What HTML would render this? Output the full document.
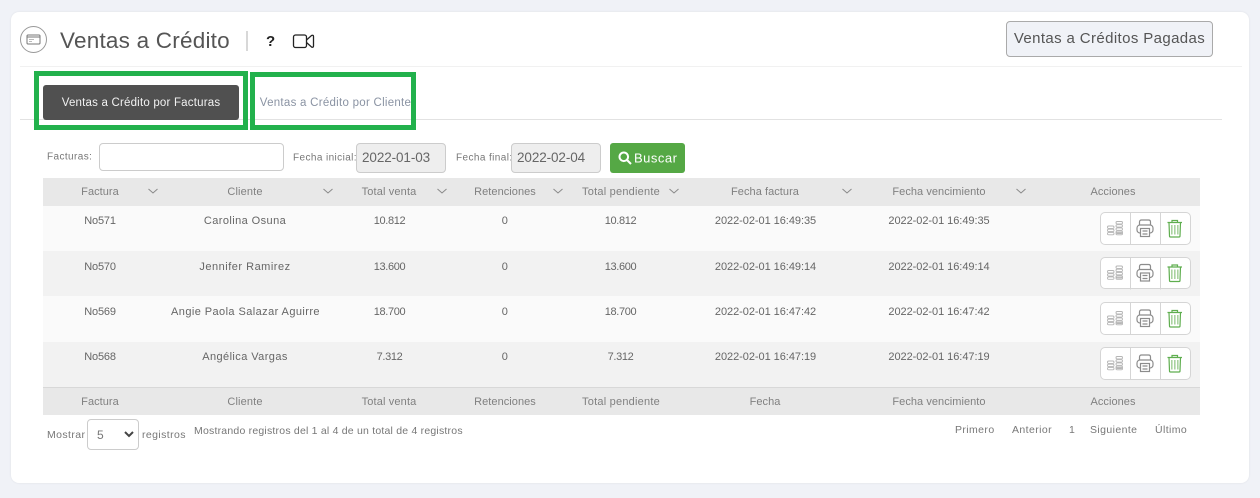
<!DOCTYPE html>
<html lang="es"><head><meta charset="utf-8"><title>Ventas a Crédito</title>
<style>
html,body{margin:0;padding:0;width:1260px;height:498px;overflow:hidden;background:#f0f2f7;font-family:"Liberation Sans",sans-serif;}
.a{position:absolute;}
.t{position:absolute;white-space:nowrap;transform:translate(-50%,-50%);font-size:11px;color:#777;letter-spacing:.42px;}
.l{position:absolute;white-space:nowrap;transform:translateY(-50%);font-size:10.5px;color:#777;letter-spacing:.4px;}
.d{font-size:11px;color:#666;}
.h{color:#808080;letter-spacing:.05px;}
.c{letter-spacing:.14px;}
.v{letter-spacing:.15px;}
.p{letter-spacing:.22px;}
.no{letter-spacing:-.18px;}
.n{letter-spacing:-.35px;}
.f{letter-spacing:-.05px;}
.bg{border:5px solid #22b14c;box-sizing:border-box;}
.date{position:absolute;box-sizing:border-box;top:143px;height:30px;background:#eee;border:1px solid #ccc;border-radius:4px;font-size:13.5px;letter-spacing:-.1px;color:#666;line-height:28px;padding-left:5px;}
.acts{position:absolute;left:1100px;width:91px;box-sizing:border-box;background:#fff;border:1px solid #d5d5d5;border-radius:5px;}
.acts svg{position:absolute;left:0;top:0;}
</style></head><body>
<div class="a" style="left:11px;top:12px;width:1238px;height:471px;background:#fff;border-radius:8px;box-shadow:0 0 2px rgba(0,0,0,.08)"></div>

<svg class="a" style="left:20px;top:26px" width="28" height="28" viewBox="0 0 28 28" fill="none"><circle cx="13.5" cy="13.5" r="13" stroke="#999"/><rect x="7" y="9" width="13" height="9" rx="1" stroke="#777"/><path d="M7 11h13" stroke="#777"/><path d="M9 13.5h5M9 15.5h3" stroke="#bbb"/></svg>
<div class="a" style="left:60px;top:27px;font-size:22.5px;line-height:28px;color:#555;letter-spacing:.22px;white-space:nowrap">Ventas a Crédito</div>
<div class="a" style="left:246px;top:31px;width:2px;height:20px;background:#d8d8d8"></div>
<div class="a" style="left:266px;top:32px;font-size:15px;line-height:20px;font-weight:bold;color:#222">?</div>
<svg class="a" style="left:292px;top:34px" width="24" height="16" viewBox="0 0 24 16" fill="none" stroke="#222" stroke-width="1.3"><rect x="1.500" y="1" width="13" height="12.500" rx="2"/><path d="M14.500 6l5-4.500q2-.8 2 1v9.500q0 1.800-2 1l-5-4.500"/></svg>

<div class="a" style="left:1006px;top:21px;width:207px;height:36px;box-sizing:border-box;background:#f0f2f7;border:1px solid #aaa;border-radius:4px;font-size:15px;line-height:33px;text-align:center;color:#555;letter-spacing:.38px;white-space:nowrap">Ventas a Créditos Pagadas</div>
<div class="a" style="left:20px;top:66px;width:1222px;height:1px;background:#f1f1f1"></div>
<div class="a" style="left:20px;top:119px;width:1202px;height:1px;background:#e2e2e2"></div>

<div class="a" style="left:43px;top:85px;width:196px;height:35px;background:#505050;border-radius:3px;color:#f2f2f2;font-size:11.500px;line-height:36px;text-align:center;letter-spacing:.2px;white-space:nowrap">Ventas a Crédito por Facturas</div>
<div class="t" style="left:335.500px;top:103px;color:#8a93a3;font-size:11.500px;letter-spacing:.27px">Ventas a Crédito por Cliente</div>
<div class="a bg" style="left:34px;top:71px;width:214px;height:59px"></div>
<div class="a bg" style="left:250px;top:72px;width:166px;height:58px"></div>

<div class="l" style="left:47px;top:157px;font-size:10px">Facturas:</div>
<div class="a" style="left:99px;top:143px;width:185px;height:28px;box-sizing:border-box;border:1px solid #ccc;border-radius:4px;background:#fff"></div>
<div class="l" style="left:293px;top:158px;font-size:10px">Fecha inicial:</div>
<div class="date" style="left:356px;width:90px">2022-01-03</div>
<div class="l" style="left:456px;top:158px;font-size:10px">Fecha final:</div>
<div class="date" style="left:511px;width:90px">2022-02-04</div>
<div class="a" style="left:610px;top:143px;width:75px;height:30px;background:#55a845;border-radius:3px"></div>
<svg class="a" style="left:618px;top:151px" width="14" height="14" viewBox="0 0 14 14" fill="none" stroke="#fff" stroke-width="2"><circle cx="5.800" cy="5.800" r="4.300"/><path d="M9 9l4 4"/></svg>
<div class="l" style="left:634px;top:158px;font-size:13px;color:#fff;letter-spacing:.5px">Buscar</div>

<!-- table backgrounds -->
<div class="a" style="left:43px;top:178px;width:1157px;height:28px;background:#e8e8e8"></div>
<div class="a" style="left:43px;top:206px;width:1157px;height:45px;background:#fafafa"></div>
<div class="a" style="left:43px;top:251px;width:1157px;height:45px;background:#f2f2f2"></div>
<div class="a" style="left:43px;top:296px;width:1157px;height:46px;background:#fafafa"></div>
<div class="a" style="left:43px;top:342px;width:1157px;height:45px;background:#f2f2f2"></div>
<div class="a" style="left:43px;top:387px;width:1157px;height:1px;background:#d8d8d8"></div>
<div class="a" style="left:43px;top:388px;width:1157px;height:27px;background:#e8e8e8"></div>

<!-- header -->
<div class="t h" style="left:100px;top:192px">Factura</div>
<div class="t h c" style="left:245px;top:192px">Cliente</div>
<div class="t h v" style="left:389px;top:192px">Total venta</div>
<div class="t h" style="left:505px;top:192px">Retenciones</div>
<div class="t h p" style="left:621px;top:192px">Total pendiente</div>
<div class="t h" style="left:765px;top:192px">Fecha factura</div>
<div class="t h" style="left:939px;top:192px">Fecha vencimiento</div>
<div class="t h" style="left:1113px;top:192px">Acciones</div>
<svg class="a" style="left:0;top:185px" width="1260" height="12" fill="none" stroke="#8a8a8a" stroke-width="1">
<path d="M148.500 4l4.500 4 4.500-4M323.500 4l4.500 4 4.500-4M437.500 4l4.500 4 4.500-4M553.500 4l4.500 4 4.500-4M669.500 4l4.500 4 4.500-4M842.500 4l4.500 4 4.500-4M1016.500 4l4.500 4 4.500-4"/></svg>

<!-- row 1 -->
<div class="t d no" style="left:100px;top:221px">No571</div>
<div class="t d" style="left:245px;top:221px">Carolina Osuna</div>
<div class="t d n" style="left:389.500px;top:221px">10.812</div>
<div class="t d" style="left:505px;top:221px">0</div>
<div class="t d n" style="left:620.500px;top:221px">10.812</div>
<div class="t d f" style="left:765.500px;top:221px">2022-02-01 16:49:35</div>
<div class="t d f" style="left:939px;top:221px">2022-02-01 16:49:35</div>
<!-- row 2 -->
<div class="t d no" style="left:100px;top:267px">No570</div>
<div class="t d" style="left:245px;top:267px;letter-spacing:.5px">Jennifer Ramirez</div>
<div class="t d n" style="left:389.500px;top:267px">13.600</div>
<div class="t d" style="left:505px;top:267px">0</div>
<div class="t d n" style="left:620.500px;top:267px">13.600</div>
<div class="t d f" style="left:765.500px;top:267px">2022-02-01 16:49:14</div>
<div class="t d f" style="left:939px;top:267px">2022-02-01 16:49:14</div>
<!-- row 3 -->
<div class="t d no" style="left:100px;top:312px">No569</div>
<div class="t d" style="left:245.500px;top:312px">Angie Paola Salazar Aguirre</div>
<div class="t d n" style="left:389.500px;top:312px">18.700</div>
<div class="t d" style="left:505px;top:312px">0</div>
<div class="t d n" style="left:620.500px;top:312px">18.700</div>
<div class="t d f" style="left:765.500px;top:312px">2022-02-01 16:47:42</div>
<div class="t d f" style="left:939px;top:312px">2022-02-01 16:47:42</div>
<!-- row 4 -->
<div class="t d no" style="left:100px;top:357px">No568</div>
<div class="t d" style="left:245px;top:357px">Angélica Vargas</div>
<div class="t d n" style="left:389.500px;top:357px">7.312</div>
<div class="t d" style="left:505px;top:357px">0</div>
<div class="t d n" style="left:620.500px;top:357px">7.312</div>
<div class="t d f" style="left:765.500px;top:357px">2022-02-01 16:47:19</div>
<div class="t d f" style="left:939px;top:357px">2022-02-01 16:47:19</div>

<!-- actions -->
<svg width="0" height="0" style="position:absolute"><defs>
<g id="icons" fill="none">
<path d="M29.500 0v32M59.500 0v32" stroke="#d5d5d5"/>
<g stroke="#b5b5b5" stroke-width=".9"><rect x="6.500" y="13" width="6.500" height="2.400" rx="1.200"/><rect x="6.500" y="16.200" width="6.500" height="2.400" rx="1.200"/><rect x="6.500" y="19.400" width="6.500" height="2.400" rx="1.200"/><rect x="15" y="8.500" width="6.500" height="2.400" rx="1.200"/><rect x="15" y="11.700" width="6.500" height="2.400" rx="1.200"/><rect x="15" y="14.900" width="6.500" height="2.400" rx="1.200"/><rect x="15" y="18.100" width="6.500" height="2.400" rx="1.200"/><rect x="15" y="19.400" width="6.500" height="2.400" rx="1.200"/></g>
<g stroke="#8c8c8c" stroke-width="1.200"><path d="M38.500 12V9q0-2 2-2h7q2 0 2 2v3"/><rect x="36" y="12" width="16" height="8" rx="3"/><rect x="39.500" y="15.500" width="9" height="8" fill="#fff"/><path d="M41.500 18h5M41.500 21h5"/></g>
<g stroke="#5fae4f" stroke-width="1.200"><path d="M66.500 9.500h14.500M71 9V7.500h5.500V9"/><path d="M68 9.500l.5 13.500q0 1 1 1h8.500q1 0 1-1l.5-13.500"/></g>
<path d="M70.800 12v9.500M73.800 12v9.500M76.800 12v9.500" stroke="#a9d3a0" stroke-width="1.600"/>
</g></defs></svg>
<div class="acts" style="top:212px;height:33px"><svg width="90" height="33"><use href="#icons"/></svg></div>
<div class="acts" style="top:257px;height:32px"><svg width="90" height="32"><use href="#icons" y="-.5"/></svg></div>
<div class="acts" style="top:302px;height:33px"><svg width="90" height="33"><use href="#icons"/></svg></div>
<div class="acts" style="top:347px;height:33px"><svg width="90" height="33"><use href="#icons"/></svg></div>

<!-- footer -->
<div class="t h" style="left:100px;top:402px">Factura</div>
<div class="t h c" style="left:245px;top:402px">Cliente</div>
<div class="t h v" style="left:389px;top:402px">Total venta</div>
<div class="t h" style="left:505px;top:402px">Retenciones</div>
<div class="t h p" style="left:621px;top:402px">Total pendiente</div>
<div class="t h" style="left:765px;top:402px">Fecha</div>
<div class="t h" style="left:939px;top:402px">Fecha vencimiento</div>
<div class="t h" style="left:1113px;top:402px">Acciones</div>

<div class="l" style="left:47px;top:435px;font-size:10.500px">Mostrar</div>
<div class="a" style="left:87px;top:419px;width:52px;height:31px;box-sizing:border-box;border:1px solid #ccc;border-radius:4px;background:#fff"></div>
<div class="l" style="left:97px;top:435px;font-size:12px">5</div>
<svg class="a" style="left:123px;top:430px" width="12" height="9" fill="none" stroke="#444" stroke-width="2"><path d="M2 2l4 4 4-4"/></svg>
<div class="l" style="left:142px;top:435px;font-size:10.500px">registros</div>
<div class="l" style="left:194px;top:431px;font-size:10.500px;letter-spacing:.21px">Mostrando registros del 1 al 4 de un total de 4 registros</div>
<div class="l" style="left:955px;top:430px">Primero</div>
<div class="l" style="left:1012px;top:430px">Anterior</div>
<div class="l" style="left:1069px;top:430px">1</div>
<div class="l" style="left:1090px;top:430px">Siguiente</div>
<div class="l" style="left:1155px;top:430px">Último</div>
</body></html>
